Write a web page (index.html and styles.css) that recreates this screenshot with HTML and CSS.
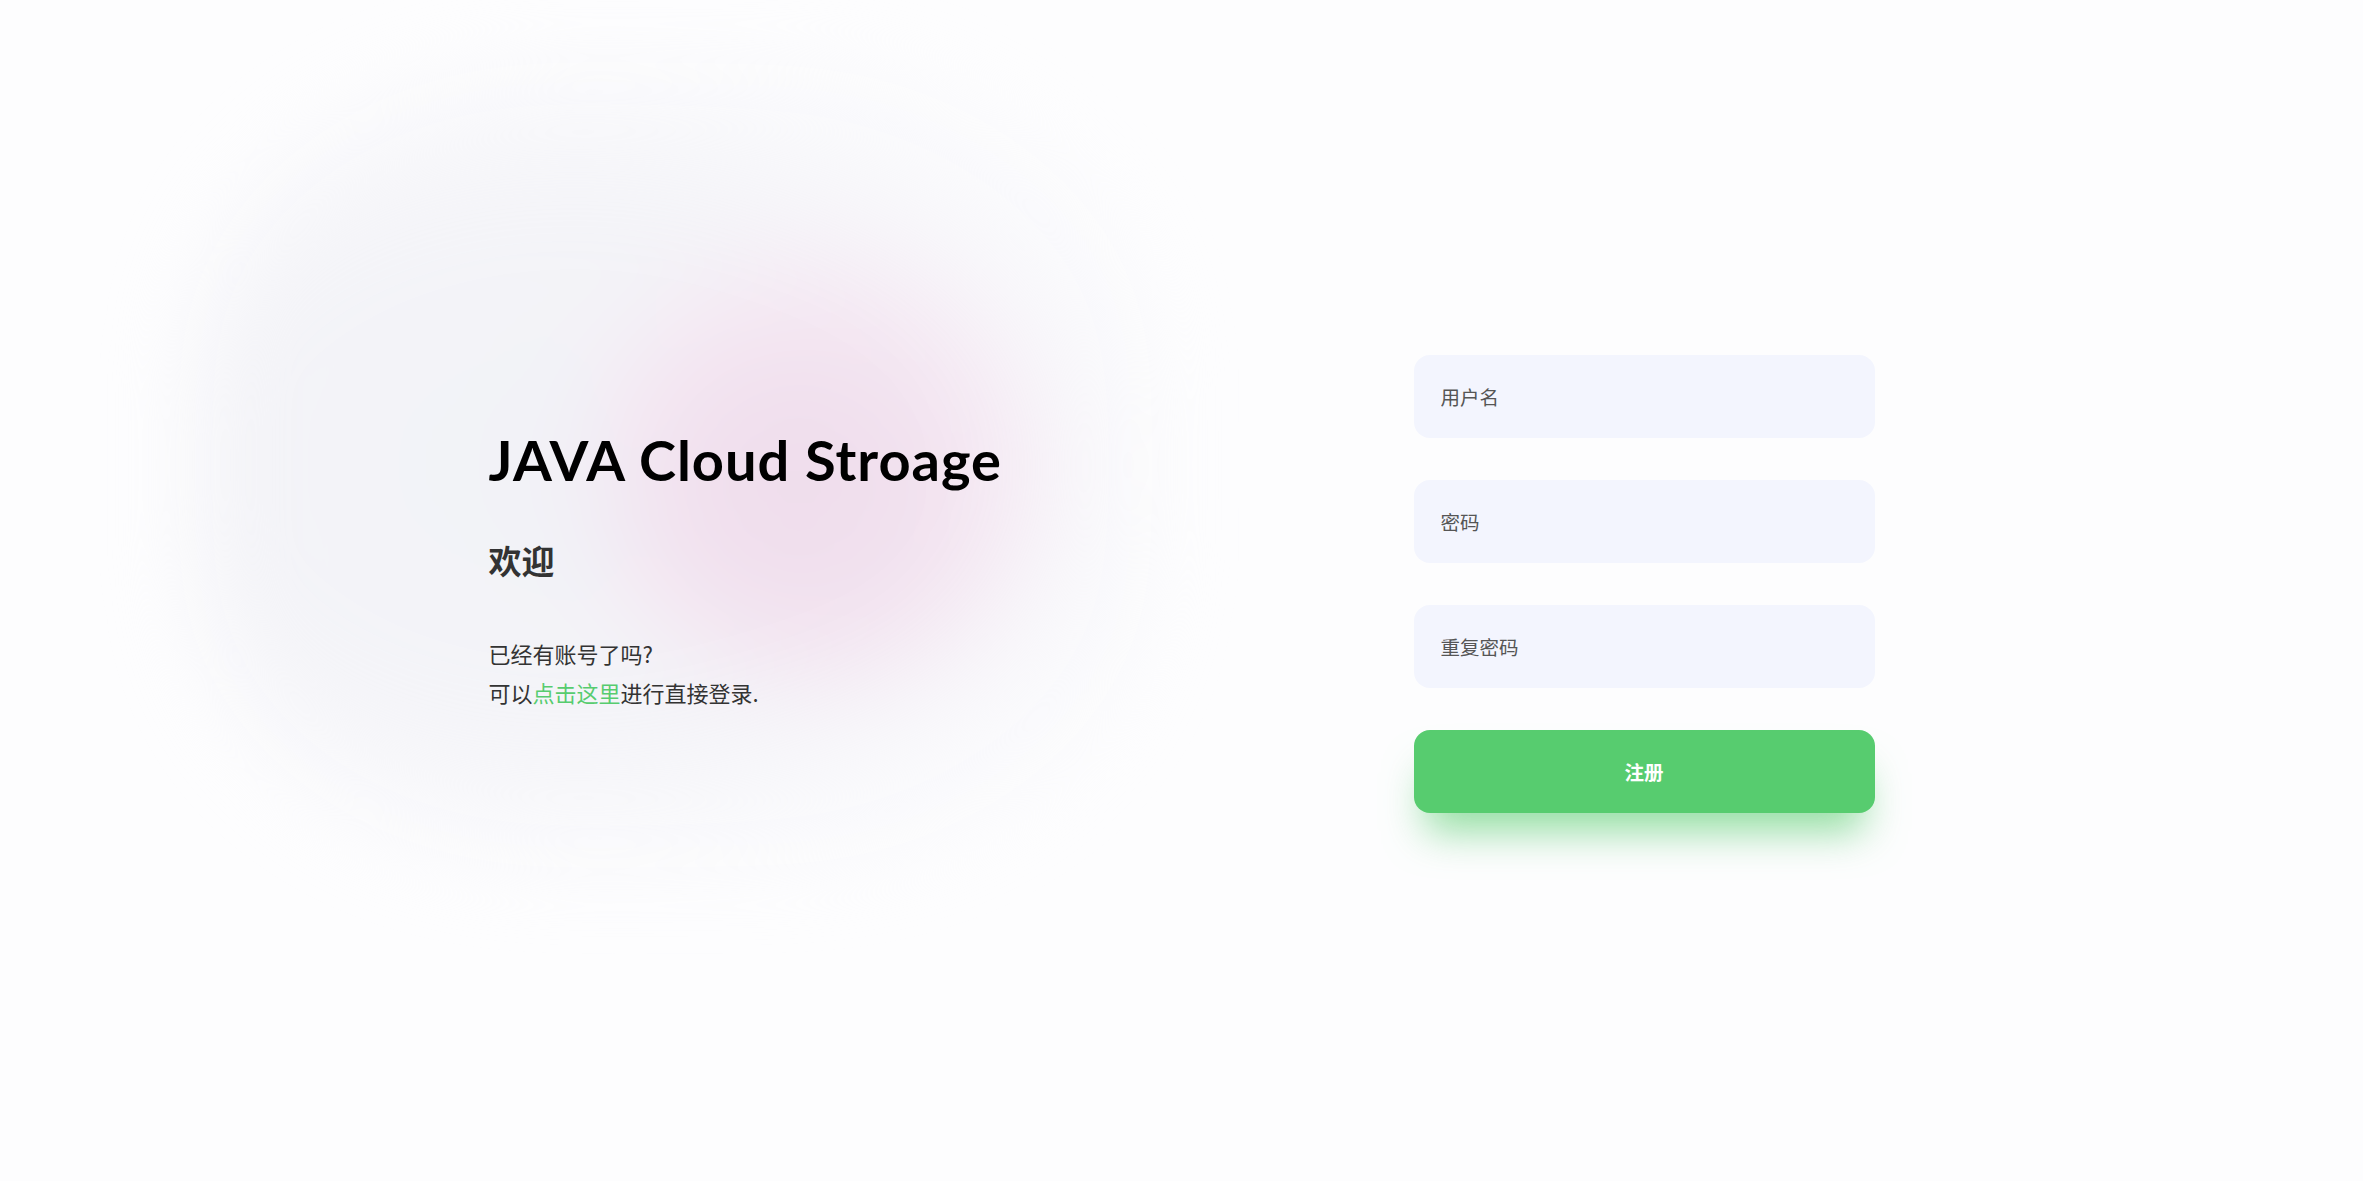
FILE: index.html
```html
<!DOCTYPE html>
<html lang="zh-CN">
<head>
<meta charset="utf-8">
<title>JAVA Cloud Stroage</title>
<link rel="stylesheet" href="styles.css">
</head>
<body>
<div class="blob"><div class="blob-core"></div></div>
<main class="page">
  <section class="intro">
    <h1 class="title">JAVA Cloud Stroage</h1>
    <h2 class="welcome">欢迎</h2>
    <p class="hint">已经有账号了吗?<br>可以<a class="link" href="#">点击这里</a>进行直接登录.</p>
  </section>
  <form class="form">
    <input class="field" type="text" placeholder="用户名">
    <input class="field" type="password" placeholder="密码">
    <input class="field" type="password" placeholder="重复密码">
    <button class="submit" type="button">注册</button>
  </form>
</main>
</body>
</html>
```
FILE: styles.css
```css
* { box-sizing: border-box; }
html, body { margin: 0; padding: 0; }
body {
  background: #fdfdfe;
  font-family: "Noto Sans CJK SC", "Noto Sans", sans-serif;
  color: #333;
  overflow: hidden;
  height: 100vh;
  position: relative;
}
.blob {
  position: absolute;
  left: 195px;
  top: 70px;
  width: 950px;
  height: 790px;
  border-radius: 38%;
  background: radial-gradient(ellipse at 40% 50%, #f1f2f7 0%, #f4f4f8 45%, rgba(249,249,252,0.7) 75%, rgba(253,253,254,0) 100%);
  filter: blur(40px);
  z-index: 0;
}
.blob-core {
  position: absolute;
  left: 42%;
  top: 22%;
  width: 48%;
  height: 56%;
  border-radius: 50%;
  background: radial-gradient(ellipse at 45% 55%, #eedbeb 0%, #f2e2ef 40%, rgba(249,238,247,0.6) 70%, rgba(252,246,250,0) 100%);
  filter: blur(30px);
}
.page {
  position: relative;
  z-index: 1;
  height: 100vh;
  width: 1386px;
  margin: 0 auto;
  display: flex;
  justify-content: space-between;
  align-items: center;
}
.intro {
  padding-bottom: 43px;
}
.title {
  font-family: Lato, "Open Sans", sans-serif;
  font-weight: 700;
  font-size: 56px;
  letter-spacing: 1px;
  line-height: 1.2;
  color: #000;
  margin: 0 0 46px;
}
.welcome {
  font-size: 33px;
  font-weight: 700;
  line-height: 1.3;
  margin: 0 0 52px;
  color: #333;
}
.hint {
  font-size: 22px;
  line-height: 39px;
  margin: 0;
  color: #333;
}
.link {
  color: #57cc6f;
  text-decoration: none;
}
.form {
  width: 461px;
  display: flex;
  flex-direction: column;
  gap: 42px;
  padding-bottom: 13px;
}
.field {
  height: 83px;
  border: none;
  outline: none;
  border-radius: 16px;
  background: #f3f5fe;
  padding: 0 27px;
  font-family: "Noto Sans CJK SC", sans-serif;
  font-size: 19.5px;
  color: #333;
}
.field::placeholder { color: #555; }
.submit {
  height: 83px;
  border: none;
  border-radius: 16px;
  background: #57cc6f;
  color: #fff;
  font-family: "Noto Sans CJK SC", sans-serif;
  font-weight: 700;
  font-size: 19.5px;
  box-shadow: 0 30px 40px -12px rgba(87, 204, 111, 0.65);
  cursor: pointer;
}
```
